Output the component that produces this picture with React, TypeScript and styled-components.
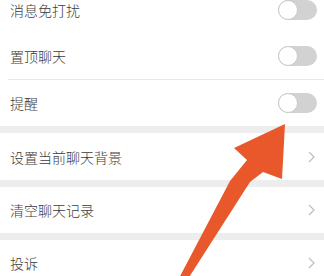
import * as React from 'react';
import styled, { createGlobalStyle } from 'styled-components';

const GlobalStyle = createGlobalStyle`
  html, body {
    margin: 0;
    padding: 0;
    background: #ffffff;
    overflow: hidden;
  }
  body {
    font-family: "Noto Sans CJK SC", "Noto Sans", sans-serif;
  }
`;

const Page = styled.div`
  position: relative;
  width: 324px;
  height: 276px;
  overflow: hidden;
  background: #ffffff;
`;

const List = styled.div`
  display: flex;
  flex-direction: column;
  margin-top: -13px;
`;

const Group = styled.div`
  display: flex;
  flex-direction: column;
  background: #ffffff;
`;

const Band = styled.div`
  height: 7px;
  background: #ededed;
`;

const Divider = styled.div`
  height: 1px;
  margin-left: 8px;
  background: #e8e8e8;
`;

const Row = styled.div<{ $h?: number }>`
  display: flex;
  align-items: center;
  justify-content: space-between;
  height: ${(p) => p.$h || 46}px;
  padding: 0 7px 0 10px;
`;

const Label = styled.span`
  font-size: 14px;
  line-height: 1;
  color: #3b3b3b;
  font-weight: 300;
`;

const Track = styled.div`
  position: relative;
  width: 39px;
  height: 20px;
  border-radius: 10px;
  background: #d2d2d2;
  flex-shrink: 0;
`;

const Knob = styled.div`
  position: absolute;
  left: 0;
  top: 0;
  width: 18px;
  height: 18px;
  border-radius: 50%;
  background: #ffffff;
  border: 1px solid #c9c9c9;
`;

const Chevron = styled.svg`
  width: 7px;
  height: 12px;
  margin-right: 2px;
  flex-shrink: 0;
`;

const Overlay = styled.svg`
  position: absolute;
  left: 0;
  top: 0;
  width: 324px;
  height: 276px;
  pointer-events: none;
`;

const Toggle = () => (
  <Track>
    <Knob />
  </Track>
);

const Arrow = () => (
  <Chevron viewBox="0 0 7 12">
    <path d="M1 1 L6 6 L1 11" fill="none" stroke="#bdbdbd" strokeWidth="1.2" />
  </Chevron>
);

export default function App() {
  return (
    <Page>
      <GlobalStyle />
      <List>
        <Group>
          <Row>
            <Label>消息免打扰</Label>
            <Toggle />
          </Row>
          <Row>
            <Label>置顶聊天</Label>
            <Toggle />
          </Row>
          <Divider />
          <Row>
            <Label>提醒</Label>
            <Toggle />
          </Row>
        </Group>
        <Band />
        <Group>
          <Row $h={47}>
            <Label>设置当前聊天背景</Label>
            <Arrow />
          </Row>
        </Group>
        <Band />
        <Group>
          <Row>
            <Label>清空聊天记录</Label>
            <Arrow />
          </Row>
        </Group>
        <Band />
        <Group>
          <Row>
            <Label>投诉</Label>
            <Arrow />
          </Row>
        </Group>
      </List>
      <Overlay viewBox="0 0 324 276">
        <polygon
          points="285,124 234,148 247,160 230,181 177,282 186,282 250,182 263,172 282,179"
          fill="#e9582b"
        />
      </Overlay>
    </Page>
  );
}
